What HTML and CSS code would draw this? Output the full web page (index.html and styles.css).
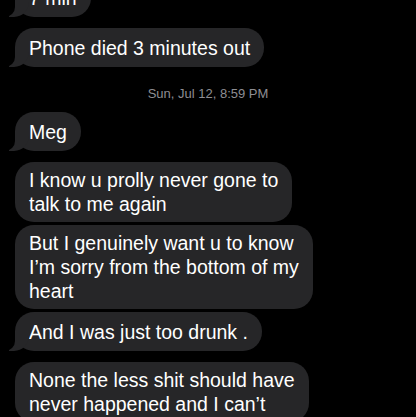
FILE: index.html
```html
<!DOCTYPE html>
<html lang="en">
<head>
    <meta charset="UTF-8">
    <meta name="viewport" content="width=device-width, initial-scale=1.0">
    <title>Messages</title>
    <link rel="stylesheet" href="styles.css">
</head>
<body>
    <div class="thread">
        <div class="bubble tail first">7 min</div>
        <div class="bubble tail">Phone died 3 minutes out</div>

        <div class="timestamp">Sun, Jul 12, 8:59 PM</div>

        <div class="bubble tail">Meg</div>
        <div class="bubble multi">I know u prolly never gone to<br>talk to me again</div>
        <div class="bubble multi">But I genuinely want u to know<br>I’m sorry from the bottom of my<br>heart</div>
        <div class="bubble tail">And I was just too drunk .</div>
        <div class="bubble multi">None the less shit should have<br>never happened and I can’t</div>
    </div>
</body>
</html>
```

FILE: styles.css
```css
body {
    margin: 0;
    background: #000;
    font-family: 'Liberation Sans', Arial, sans-serif;
    color: #fff;
    overflow: hidden;
}
.thread {
    display: flex;
    flex-direction: column;
    align-items: flex-start;
    gap: 3px;
    padding: 0 15px;
}
.bubble {
    position: relative;
    background: #262628;
    border-radius: 19px;
    padding: 7.5px 14px;
    font-size: 19.5px;
    line-height: 24px;
    white-space: nowrap;
}
.bubble.multi {
    padding: 6px 14px;
}
.bubble.first {
    margin-top: -22px;
}
.bubble.tail {
    margin-bottom: 8px;
}
.bubble.tail::before {
    content: "";
    position: absolute;
    bottom: 0;
    left: -6px;
    width: 20px;
    height: 20px;
    background: #262628;
    border-bottom-right-radius: 15px;
}
.bubble.tail::after {
    content: "";
    position: absolute;
    bottom: 0;
    left: -10px;
    width: 10px;
    height: 20px;
    background: #000;
    border-bottom-right-radius: 10px;
}
.timestamp {
    align-self: center;
    margin: 8px 0 7px;
    font-size: 13px;
    line-height: 16px;
    color: #8e8e93;
}
```
